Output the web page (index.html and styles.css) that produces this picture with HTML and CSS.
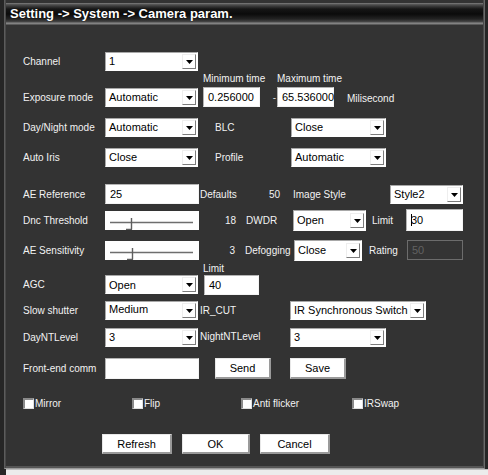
FILE: index.html
```html
<!DOCTYPE html>
<html>
<head>
<meta charset="utf-8">
<link rel="stylesheet" href="styles.css">
</head>
<body>
<div class="window">
  <div class="header">Setting -&gt; System -&gt; Camera param.</div>
  <div class="content">
    <div class="row r1">
      <span class="lbl">Channel</span>
      <div class="sel w93"><span class="val">1</span><span class="btn"><svg width="7" height="4" viewBox="0 0 7 4"><polygon points="0,0 7,0 3.5,4" fill="#000"/></svg></span></div>
    </div>
    <div class="row rl1">
      <span class="spacer"></span>
      <span class="small w74">Minimum time</span>
      <span class="small">Maximum time</span>
    </div>
    <div class="row r2">
      <span class="lbl">Exposure mode</span>
      <div class="sel w93"><span class="val">Automatic</span><span class="btn"><svg width="7" height="4" viewBox="0 0 7 4"><polygon points="0,0 7,0 3.5,4" fill="#000"/></svg></span></div>
      <div class="inp w57 ml5">0.256000</div>
      <span class="dash">-</span>
      <div class="inp w57">65.536000</div>
      <span class="txt ml13 unit">Milisecond</span>
    </div>
    <div class="row r3">
      <span class="lbl">Day/Night mode</span>
      <div class="sel w93"><span class="val">Automatic</span><span class="btn"><svg width="7" height="4" viewBox="0 0 7 4"><polygon points="0,0 7,0 3.5,4" fill="#000"/></svg></span></div>
      <span class="txt ml17 w76">BLC</span>
      <div class="sel w95"><span class="val">Close</span><span class="btn"><svg width="7" height="4" viewBox="0 0 7 4"><polygon points="0,0 7,0 3.5,4" fill="#000"/></svg></span></div>
    </div>
    <div class="row r4">
      <span class="lbl">Auto Iris</span>
      <div class="sel w93"><span class="val">Close</span><span class="btn"><svg width="7" height="4" viewBox="0 0 7 4"><polygon points="0,0 7,0 3.5,4" fill="#000"/></svg></span></div>
      <span class="txt ml17 w76">Profile</span>
      <div class="sel w95"><span class="val">Automatic</span><span class="btn"><svg width="7" height="4" viewBox="0 0 7 4"><polygon points="0,0 7,0 3.5,4" fill="#000"/></svg></span></div>
    </div>
    <div class="row r5">
      <span class="lbl">AE Reference</span>
      <div class="inp w94">25</div>
      <span class="txt ml1 w50">Defaults</span>
      <span class="txt w30 right">50</span>
      <span class="txt ml13 w97">Image Style</span>
      <div class="sel w73"><span class="val">Style2</span><span class="btn"><svg width="7" height="4" viewBox="0 0 7 4"><polygon points="0,0 7,0 3.5,4" fill="#000"/></svg></span></div>
    </div>
    <div class="row r6">
      <span class="lbl">Dnc Threshold</span>
      <div class="slider"><svg width="94" height="19" viewBox="0 0 94 19"><path d="M5 11.5H88" stroke="#6e6e6e" stroke-width="1.4" fill="none"/><path d="M26.5 7V18.5M21 18.5H27" stroke="#5e5e5e" stroke-width="1.4" fill="none"/></svg></div>
      <span class="txt w37 right">18</span>
      <span class="txt ml10 w47">DWDR</span>
      <div class="sel w73 h21"><span class="val">Open</span><span class="btn"><svg width="7" height="4" viewBox="0 0 7 4"><polygon points="0,0 7,0 3.5,4" fill="#000"/></svg></span></div>
      <span class="txt ml6 w34">Limit</span>
      <div class="inp w57 h22"><span class="caret"></span>30</div>
    </div>
    <div class="row r7">
      <span class="lbl">AE Sensitivity</span>
      <div class="slider"><svg width="94" height="19" viewBox="0 0 94 19"><path d="M5 11.5H88" stroke="#6e6e6e" stroke-width="1.4" fill="none"/><path d="M27.5 7V18.5M22 18.5H28" stroke="#5e5e5e" stroke-width="1.4" fill="none"/></svg></div>
      <span class="txt w36 right">3</span>
      <span class="txt ml10 w49 clip">Defogging</span>
      <div class="sel w68 h21"><span class="val">Close</span><span class="btn"><svg width="7" height="4" viewBox="0 0 7 4"><polygon points="0,0 7,0 3.5,4" fill="#000"/></svg></span></div>
      <span class="txt ml7 w38">Rating</span>
      <div class="inp dis w56">50</div>
    </div>
    <div class="row rl2">
      <span class="spacer"></span>
      <span class="small">Limit</span>
    </div>
    <div class="row r8">
      <span class="lbl">AGC</span>
      <div class="sel w93"><span class="val">Open</span><span class="btn"><svg width="7" height="4" viewBox="0 0 7 4"><polygon points="0,0 7,0 3.5,4" fill="#000"/></svg></span></div>
      <div class="inp w55 ml6">40</div>
    </div>
    <div class="row r9">
      <span class="lbl">Slow shutter</span>
      <div class="sel w93"><span class="val up">Medium</span><span class="btn"><svg width="7" height="4" viewBox="0 0 7 4"><polygon points="0,0 7,0 3.5,4" fill="#000"/></svg></span></div>
      <span class="txt ml2 w90">IR_CUT</span>
      <div class="sel w136"><span class="val">IR Synchronous Switch</span><span class="btn"><svg width="7" height="4" viewBox="0 0 7 4"><polygon points="0,0 7,0 3.5,4" fill="#000"/></svg></span></div>
    </div>
    <div class="row r10">
      <span class="lbl">DayNTLevel</span>
      <div class="sel w93"><span class="val">3</span><span class="btn"><svg width="7" height="4" viewBox="0 0 7 4"><polygon points="0,0 7,0 3.5,4" fill="#000"/></svg></span></div>
      <span class="txt ml2 w90 up">NightNTLevel</span>
      <div class="sel w96"><span class="val">3</span><span class="btn"><svg width="7" height="4" viewBox="0 0 7 4"><polygon points="0,0 7,0 3.5,4" fill="#000"/></svg></span></div>
    </div>
    <div class="row r11">
      <span class="lbl">Front-end comm</span>
      <div class="inp w94 h21"></div>
      <button class="bt ml16 w56">Send</button>
      <button class="bt ml19 w56">Save</button>
    </div>
    <div class="row r12">
      <label class="chk w109"><span class="box"></span>Mirror</label>
      <label class="chk w109"><span class="box"></span>Flip</label>
      <label class="chk w111"><span class="box"></span>Anti flicker</label>
      <label class="chk"><span class="box"></span>IRSwap</label>
    </div>
    <div class="row r13">
      <button class="bt w70">Refresh</button>
      <button class="bt w68">OK</button>
      <button class="bt w70">Cancel</button>
    </div>
  </div>
</div>
<div class="strip"></div>
</body>
</html>
```
FILE: styles.css
```css
html, body {
  margin: 0;
  padding: 0;
}
body {
  width: 488px;
  height: 475px;
  overflow: hidden;
  background: #262626;
  font-family: "Liberation Sans", Arial, sans-serif;
  font-size: 10px;
  color: #f2f2f2;
}
.window {
  box-sizing: border-box;
  margin-left: 4px;
  width: 481px;
  height: 469px;
  padding: 0 1px;
  background: #333333;
  border-left: 1px solid #5c5c5c;
  border-right: 1px solid #6a6a6a;
  border-bottom: 1px solid #9a9a9a;
  box-shadow: inset 1px 0 0 #484848, inset -1px 0 0 #4a4a4a, inset 0 -2px 0 #555;
  overflow: hidden;
}
.header {
  margin-top: 3px;
  height: 22px;
  line-height: 22px;
  padding-left: 4px;
  font-size: 13px;
  font-weight: bold;
  color: #fff;
  text-shadow: 0 0 1px #000;
  background: linear-gradient(#858585 0, #5c5c5c 1px, #3c3c3c 3px, #161616 6px, #0b0b0b 11px, #232323 16px, #484848 19px, #8a8a8a 20px, #7a7a7a 21px, #3a3a3a 22px);
}
.content {
  padding-left: 17px;
}
.row {
  display: flex;
  align-items: center;
}
.r1 { margin-top: 26px; height: 20px; }
.rl1 { height: 14px; margin-top: 0; }
.r2 { margin-top: 2px; height: 20px; }
.r3 { margin-top: 10px; height: 20px; }
.r4 { margin-top: 10px; height: 20px; }
.r5 { margin-top: 17px; height: 20px; }
.r6 { margin-top: 5px; height: 22px; }
.r7 { margin-top: 8px; height: 22px; }
.rl2 { margin-top: 1px; height: 13px; }
.r8 { margin-top: 0; height: 19px; }
.r9 { margin-top: 6px; height: 20px; }
.r10 { margin-top: 7px; height: 20px; }
.r11 { margin-top: 11px; height: 21px; }
.r12 { margin-top: 18px; height: 12px; }
.r13 { margin-top: 25px; height: 20px; padding-left: 79px; gap: 10px; }

.lbl {
  width: 82px;
  flex: none;
  white-space: nowrap;
}
.spacer { width: 180px; flex: none; }
.small { font-size: 10px; white-space: nowrap; }
.txt { white-space: nowrap; flex: none; }
.unit { margin-top: 3px; }
.up { margin-top: -2px; }
.right { text-align: right; }
.clip { overflow: hidden; }
.dash { width: 17px; flex: none; text-align: right; padding-right: 1px; box-sizing: border-box; color: #ddd; }

.ml1 { margin-left: 1px; }
.ml2 { margin-left: 2px; }
.ml5 { margin-left: 5px; }
.ml6 { margin-left: 6px; }
.ml7 { margin-left: 7px; }
.ml10 { margin-left: 10px; }
.ml13 { margin-left: 13px; }
.ml16 { margin-left: 16px; }
.ml17 { margin-left: 17px; }
.ml19 { margin-left: 19px; }

.w30 { width: 30px; }
.w34 { width: 34px; }
.w36 { width: 36px; }
.w37 { width: 37px; }
.w38 { width: 38px; }
.w47 { width: 47px; }
.w49 { width: 49px; }
.w50 { width: 50px; }
.w55 { width: 55px; }
.w56 { width: 56px; }
.w57 { width: 57px; }
.w68 { width: 68px; }
.w70 { width: 70px; }
.w73 { width: 73px; }
.w74 { width: 74px; }
.w76 { width: 76px; }
.w90 { width: 90px; }
.w93 { width: 93px; }
.w94 { width: 94px; }
.w95 { width: 95px; }
.w96 { width: 96px; }
.w97 { width: 97px; }
.w109 { width: 109px; }
.w111 { width: 111px; }
.w136 { width: 136px; }

.sel {
  box-sizing: border-box;
  flex: none;
  height: 19px;
  display: flex;
  align-items: center;
  background: #fff;
  border: 1px solid #fff;
  border-top-color: #a8a8a8;
  border-left-color: #a8a8a8;
  color: #000;
  font-size: 11px;
}
.sel.h21 { height: 21px; }
.sel .val {
  flex: 1;
  padding-left: 3px;
  white-space: nowrap;
  overflow: hidden;
}
.sel .btn {
  box-sizing: border-box;
  width: 14px;
  height: 15px;
  margin-right: 1px;
  display: flex;
  align-items: center;
  justify-content: center;
  background: #fff;
  border-right: 1px solid #7c7c7c;
  border-bottom: 1px solid #7c7c7c;
  border-left: 1px solid #eee;
  border-top: 1px solid #eee;
}
.sel .btn svg { display: block; margin-top: 1px; }

.inp {
  box-sizing: border-box;
  flex: none;
  height: 20px;
  display: flex;
  align-items: center;
  padding-left: 4px;
  background: #fff;
  border: 1px solid #f4f4f4;
  border-top-color: #b4b4b4;
  border-left-color: #b4b4b4;
  color: #000;
  font-size: 11px;
  white-space: nowrap;
}
.inp.h21 { height: 21px; }
.inp.h22 { height: 22px; }
.inp.dis {
  background: #343434;
  border: 1px solid #6c6c6c;
  color: #626262;
}
.caret {
  display: inline-block;
  width: 1px;
  height: 12px;
  background: #000;
  margin-right: -1px;
}
.slider {
  box-sizing: border-box;
  flex: none;
  width: 94px;
  height: 19px;
  background: #fff;
}
.slider svg { display: block; }

.bt {
  box-sizing: border-box;
  flex: none;
  height: 21px;
  padding: 0;
  margin-top: 0;
  margin-bottom: 0;
  background: #fff;
  border: 1px solid #e8e8e8;
  border-right: 2px solid #9a9a9a;
  border-bottom: 2px solid #9a9a9a;
  font-family: "Liberation Sans", Arial, sans-serif;
  font-size: 11px;
  color: #000;
}
.r13 .bt { height: 20px; }

.chk {
  display: flex;
  align-items: center;
  flex: none;
  white-space: nowrap;
  font-size: 10px;
}
.chk .box {
  box-sizing: border-box;
  width: 11px;
  height: 11px;
  margin-right: 1px;
  background: #fff;
  border-top: 2px solid #8a8a8a;
  border-left: 2px solid #8a8a8a;
  border-right: 1px solid #e0e0e0;
  border-bottom: 1px solid #e0e0e0;
}
.strip {
  margin-left: 6px;
  height: 6px;
  background: #ececec;
  border-top: 1px solid #bdbdbd;
}
```
